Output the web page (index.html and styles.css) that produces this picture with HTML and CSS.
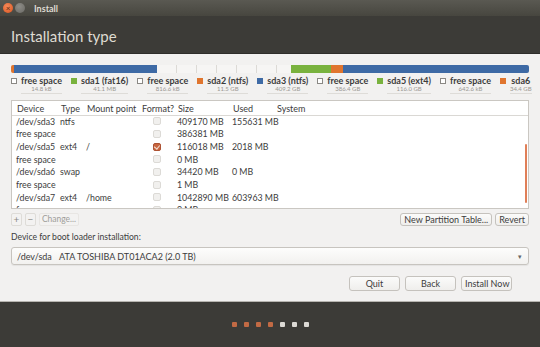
FILE: index.html
```html
<!DOCTYPE html>
<html lang="en">
<head>
    <meta charset="UTF-8">
    <title>Install</title>
    <link rel="stylesheet" href="styles.css">
</head>
<body>
<div class="window">
    <div class="titlebar">
        <span class="win-btn close">&#215;</span>
        <span class="win-btn minimize"></span>
        <span class="win-title">Install</span>
    </div>
    <div class="header">
        <h1>Installation type</h1>
    </div>

    <div class="content">
        <!-- partition map -->
        <div class="part-bar">
            <span class="seg orange w-tiny"></span>
            <span class="seg blue w-sda3"></span>
            <span class="seg free w-free"></span>
            <span class="seg green w-sda5"></span>
            <span class="seg orange w-sda6"></span>
            <span class="seg blue w-sda7"></span>
        </div>
        <div class="legend">
            <div class="legend-item"><span class="swatch empty"></span><div><b>free space</b><small>14.8 kB</small></div></div>
            <div class="legend-item"><span class="swatch green"></span><div><b>sda1 (fat16)</b><small>41.1 MB</small></div></div>
            <div class="legend-item"><span class="swatch empty"></span><div><b>free space</b><small>816.6 kB</small></div></div>
            <div class="legend-item"><span class="swatch orange"></span><div><b>sda2 (ntfs)</b><small>11.5 GB</small></div></div>
            <div class="legend-item"><span class="swatch blue"></span><div><b>sda3 (ntfs)</b><small>409.2 GB</small></div></div>
            <div class="legend-item"><span class="swatch empty"></span><div><b>free space</b><small>386.4 GB</small></div></div>
            <div class="legend-item"><span class="swatch green"></span><div><b>sda5 (ext4)</b><small>116.0 GB</small></div></div>
            <div class="legend-item"><span class="swatch empty"></span><div><b>free space</b><small>642.6 kB</small></div></div>
            <div class="legend-item"><span class="swatch orange"></span><div><b>sda6</b><small>34.4 GB</small></div></div>
        </div>

        <!-- partition table -->
        <div class="table">
            <div class="row head">
                <span>Device</span><span>Type</span><span>Mount point</span><span>Format?</span><span>Size</span><span>Used</span><span>System</span>
            </div>
            <div class="rows">
                <div class="row"><span>/dev/sda3</span><span>ntfs</span><span></span><span><i class="check"></i></span><span>409170 MB</span><span>155631 MB</span><span></span></div>
                <div class="row"><span>free space</span><span></span><span></span><span><i class="check"></i></span><span>386381 MB</span><span></span><span></span></div>
                <div class="row"><span>/dev/sda5</span><span>ext4</span><span>/</span><span><i class="check on"></i></span><span>116018 MB</span><span>2018 MB</span><span></span></div>
                <div class="row"><span>free space</span><span></span><span></span><span><i class="check"></i></span><span>0 MB</span><span></span><span></span></div>
                <div class="row"><span>/dev/sda6</span><span>swap</span><span></span><span><i class="check"></i></span><span>34420 MB</span><span>0 MB</span><span></span></div>
                <div class="row"><span>free space</span><span></span><span></span><span><i class="check"></i></span><span>1 MB</span><span></span><span></span></div>
                <div class="row"><span>/dev/sda7</span><span>ext4</span><span>/home</span><span><i class="check"></i></span><span>1042890 MB</span><span>603963 MB</span><span></span></div>
                <div class="row"><span>free space</span><span></span><span></span><span><i class="check"></i></span><span>0 MB</span><span></span><span></span></div>
            </div>
            <div class="scroll-thumb"></div>
        </div>

        <div class="toolbar">
            <div class="tool-group">
                <button class="tool">+</button><button class="tool">&#8722;</button><button class="tool change">Change...</button>
            </div>
            <div class="tool-group">
                <button class="btn small">New Partition Table...</button>
                <button class="btn small">Revert</button>
            </div>
        </div>

        <div class="field-label">Device for boot loader installation:</div>
        <div class="select">
            <span class="dev">/dev/sda</span><span>ATA TOSHIBA DT01ACA2 (2.0 TB)</span>
            <span class="arrow">&#9662;</span>
        </div>

        <div class="actions">
            <button class="btn">Quit</button>
            <button class="btn">Back</button>
            <button class="btn">Install Now</button>
        </div>
    </div>

    <div class="footer">
        <span class="dot done"></span>
        <span class="dot done"></span>
        <span class="dot done"></span>
        <span class="dot done"></span>
        <span class="dot"></span>
        <span class="dot"></span>
        <span class="dot"></span>
    </div>
</div>
</body>
</html>
```

FILE: styles.css
```css
body {
    margin: 0;
    font-family: Lato, "Liberation Sans", sans-serif;
    color: #3c3c3c;
    background-color: #3c3b37;
}
.window {
    width: 540px;
    height: 347px;
    display: flex;
    flex-direction: column;
    overflow: hidden;
}
.titlebar {
    height: 16px;
    display: flex;
    align-items: center;
    padding-left: 3px;
    background: linear-gradient(#5a5952, #47463f);
}
.win-btn {
    width: 10px;
    height: 10px;
    border-radius: 50%;
    margin-right: 2px;
    font-size: 8px;
    line-height: 10px;
    text-align: center;
    color: #5a2a12;
}
.win-btn.close {
    background: radial-gradient(circle at 40% 35%, #f78a5a, #d9541f);
}
.win-btn.minimize {
    background: radial-gradient(circle at 40% 35%, #8e8d88, #6a6964);
}
.win-title {
    margin-left: 7px;
    font-size: 9px;
    font-weight: bold;
    color: #dfdbd2;
}
.header {
    height: 37px;
    display: flex;
    align-items: center;
    padding-left: 11px;
    border-bottom: 1px solid #2e2d2a;
    background: #3c3b37;
}
.header h1 {
    margin: 0;
    margin-top: 3px;
    font-size: 15px;
    font-weight: normal;
    color: #dfdbd2;
}
.content {
    flex: 1;
    background: #f2f1f0;
    padding: 11px 11px 0 11px;
    border-bottom: 1px solid #b7b5b0;
    display: flex;
    flex-direction: column;
    font-size: 9px;
}

/* partition bar */
.part-bar {
    display: flex;
    height: 8px;
    border-radius: 2px;
    overflow: hidden;
}
.seg { height: 100%; }
.seg.orange { background: #e0752e; }
.seg.blue { background: #3e6aa5; }
.seg.green { background: #79b23e; }
.seg.free {
    background: repeating-linear-gradient(90deg, #f6f5f4 0 19px, #dcdad6 19px 20px);
}
.w-tiny { width: 3px; }
.w-sda3 { width: 143px; }
.w-free { width: 134px; }
.w-sda5 { width: 40px; }
.w-sda6 { width: 12px; }
.w-sda7 { flex: 1; }

.legend {
    display: flex;
    gap: 9px;
    margin-top: 3px;
    white-space: nowrap;
}
.legend-item {
    display: flex;
    gap: 4px;
}
.legend-item div {
    display: flex;
    flex-direction: column;
    align-items: center;
}
.legend-item b {
    font-size: 9px;
    line-height: 9px;
    color: #3c3c3c;
}
.legend-item small {
    font-size: 6px;
    line-height: 8px;
    color: #9a9893;
    border-bottom: 1px solid #dedcd8;
    width: 100%;
    text-align: center;
}
.swatch {
    width: 6px;
    height: 6px;
    margin-top: 2px;
    box-sizing: border-box;
}
.swatch.empty { border: 1px solid #8a8884; background: #fff; }
.swatch.green { background: #79b23e; }
.swatch.orange { background: #e0752e; }
.swatch.blue { background: #3e6aa5; }

/* table */
.table {
    position: relative;
    margin-top: 6px;
    height: 107px;
    border: 1px solid #cac7c2;
    background: #fff;
    overflow: hidden;
}
.row {
    display: grid;
    grid-template-columns: 44px 26px 55px 36px 55px 44px 1fr;
    height: 12.67px;
    align-items: center;
    padding-left: 4px;
    white-space: nowrap;
    font-size: 8.8px;
}
.row.head {
    height: 14px;
    border-bottom: 1px solid #dad8d4;
    padding-left: 4px;
    font-size: 9px;
}
.row.head span { padding-left: 1px; }
.rows { margin-top: -1px; }
.check {
    display: block;
    width: 8px;
    height: 8px;
    margin-left: 12px;
    box-sizing: border-box;
    border: 1px solid #dcdad6;
    border-radius: 2px;
    background: #f1f0ee;
}
.check.on {
    background: #c8663f;
    border-color: #ad5233;
    position: relative;
}
.check.on::after {
    content: "";
    position: absolute;
    left: 1px;
    top: 0;
    width: 3px;
    height: 4px;
    border: solid #f4e2d8;
    border-width: 0 1px 1px 0;
    transform: rotate(40deg);
}
.scroll-thumb {
    position: absolute;
    right: 1px;
    top: 43px;
    width: 2px;
    height: 59px;
    background: #e07f58;
    border-radius: 1px;
}

/* toolbar */
.toolbar {
    display: flex;
    justify-content: space-between;
    margin-top: 4px;
}
.tool-group {
    display: flex;
    gap: 3px;
}
.tool {
    width: 11px;
    height: 13px;
    padding: 0;
    font-family: inherit;
    font-size: 10px;
    line-height: 11px;
    color: #8c8a86;
    border: 1px solid #dedcd8;
    border-radius: 2px;
    background: #f3f2f1;
}
.tool.change {
    width: 40px;
    font-size: 8.5px;
    border-color: #e8e6e3;
    color: #a09e9a;
}
.btn {
    height: 15px;
    padding: 0 3px;
    font-family: inherit;
    font-size: 9px;
    white-space: nowrap;
    color: #3c3c3c;
    border: 1px solid #c5c2bd;
    border-radius: 3px;
    background: linear-gradient(#fbfbfa, #efeeec);
}
.btn.small { height: 13px; line-height: 11px; }
.field-label {
    margin-top: 6px;
    line-height: 10px;
    font-size: 8.6px;
}
.select {
    display: flex;
    align-items: center;
    height: 18px;
    margin-top: 5px;
    padding-left: 5px;
    box-sizing: border-box;
    border: 1px solid #c7c4bf;
    border-radius: 3px;
    background: linear-gradient(#fdfdfc, #f2f1ef);
    box-shadow: 0 1px 1px rgba(0, 0, 0, 0.06);
}
.select .dev { width: 42px; }
.select .arrow {
    margin-left: auto;
    margin-right: 6px;
    font-size: 7px;
    color: #666;
}
.actions {
    display: flex;
    justify-content: flex-end;
    gap: 5px;
    margin-top: 11px;
    margin-right: 17px;
}
.actions .btn { width: 51px; }

/* progress dots */
.footer {
    height: 45px;
    display: flex;
    justify-content: center;
    align-items: center;
    gap: 7px;
    background: #3c3b37;
}
.dot {
    width: 5px;
    height: 5px;
    border-radius: 1px;
    background: #dcdad5;
}
.dot.done { background: #c26a44; }
```
